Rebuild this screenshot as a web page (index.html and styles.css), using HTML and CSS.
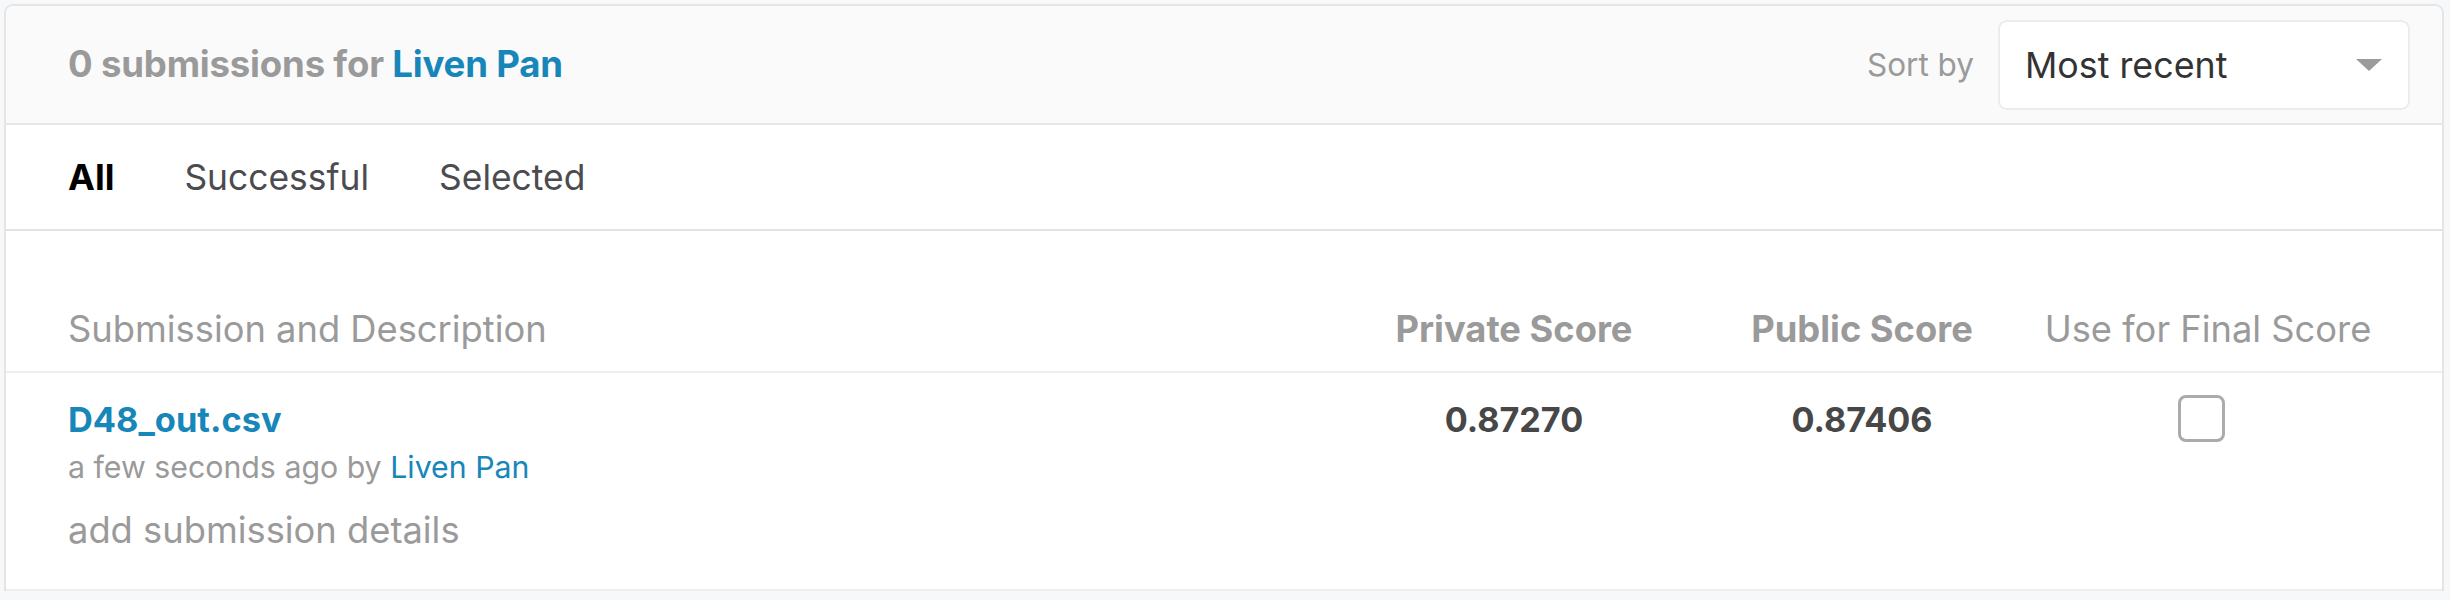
FILE: index.html
```html
<!DOCTYPE html>
<html lang="en">
<head>
<meta charset="utf-8">
<title>Submissions</title>
<link rel="stylesheet" href="styles.css">
</head>
<body>
<div class="card">
  <header class="card-header">
    <h2 class="title">0 submissions for <a class="link" href="#">Liven Pan</a></h2>
    <div class="sort">
      <span class="sort-label">Sort by</span>
      <div class="select">
        <span class="select-value">Most recent</span>
        <svg class="caret" width="26" height="12" viewBox="0 0 26 12"><path d="M0 0 H26 L13 12 Z" fill="#9b9b9b"/></svg>
      </div>
    </div>
  </header>
  <nav class="tabs">
    <span class="tab tab-active">All</span>
    <span class="tab">Successful</span>
    <span class="tab">Selected</span>
  </nav>
  <div class="table">
    <div class="row row-head">
      <div class="cell cell-main">Submission and Description</div>
      <div class="cell cell-score head-strong">Private Score</div>
      <div class="cell cell-score2 head-strong">Public Score</div>
      <div class="cell cell-use">Use for Final Score</div>
    </div>
    <div class="row row-body">
      <div class="cell cell-main">
        <a class="file" href="#">D48_out.csv</a>
        <div class="meta">a few seconds ago by <a class="link" href="#">Liven Pan</a></div>
        <div class="details">add submission details</div>
      </div>
      <div class="cell cell-score score">0.87270</div>
      <div class="cell cell-score2 score">0.87406</div>
      <div class="cell cell-use"><span class="checkbox"></span></div>
    </div>
  </div>
</div>
</body>
</html>
```
FILE: styles.css
```css
* { box-sizing: border-box; }
html, body { margin: 0; padding: 0; }
body {
  background: #f6f8fa;
  font-family: Inter, "Noto Sans", "Liberation Sans", sans-serif;
  padding: 4px 6px 0 4px;
}
a { text-decoration: none; }
.card {
  background: #fff;
  border: 2px solid #e4e5e7;
  border-bottom: none;
  border-radius: 9px 9px 0 0;
  overflow: hidden;
}
.card-header {
  height: 119px;
  background: #fafafa;
  border-bottom: 2px solid #e8e8e9;
  display: flex;
  align-items: center;
  justify-content: space-between;
  padding: 0 32px 0 62px;
}
.title {
  margin: 0;
  font-size: 36.6px;
  font-weight: 700;
  color: #9a9a9a;
  line-height: 1;
  letter-spacing: -0.2px;
}
.link { color: #1786b9; }
.sort {
  display: flex;
  align-items: center;
  gap: 24px;
}
.sort-label {
  font-size: 31.5px;
  color: #9a9a9a;
}
.select {
  width: 412px;
  height: 90px;
  background: #fff;
  border: 2px solid #ececec;
  border-radius: 9px;
  display: flex;
  align-items: center;
  justify-content: space-between;
  padding: 0 26px 0 25px;
}
.select-value {
  font-size: 35.8px;
  color: #333;
}
.tabs {
  height: 106px;
  border-bottom: 2px solid #e3e3e3;
  display: flex;
  align-items: center;
  gap: 70px;
  padding: 0 0 0 62px;
}
.tab {
  font-size: 35.4px;
  color: #4b4b50;
}
.tab-active {
  color: #000;
  font-weight: 700;
  font-size: 36px;
}
.table {
  padding-top: 76px;
}
.row {
  display: grid;
  grid-template-columns: 1fr 280px 416px 276px;
  padding: 0 96px 0 62px;
  border-bottom: 2px solid #eeeeee;
}
.cell { white-space: nowrap; }
.cell-score, .cell-score2, .cell-use { justify-self: center; text-align: center; }
.row-head {
  font-size: 36.3px;
  line-height: 44px;
  color: #9a9a9a;
  padding-bottom: 20px;
}
.head-strong { font-weight: 700; }
.row-body {
  padding-top: 25px;
  padding-bottom: 37px;
}
.file {
  display: block;
  font-size: 34.4px;
  line-height: 44px;
  font-weight: 700;
  color: #1786b9;
}
.meta {
  margin-top: 3px;
  font-size: 30.3px;
  line-height: 44px;
  color: #9a9a9a;
}
.details {
  margin-top: 19px;
  font-size: 36.3px;
  line-height: 44px;
  color: #9a9a9a;
}
.score {
  font-size: 34.2px;
  line-height: 44px;
  font-weight: 700;
  color: #474747;
}
.checkbox {
  display: inline-block;
  width: 47px;
  height: 47px;
  margin-top: -3px;
  border: 3px solid #ababab;
  border-radius: 8px;
  background: #fff;
  margin-right: 14px;
}
```
